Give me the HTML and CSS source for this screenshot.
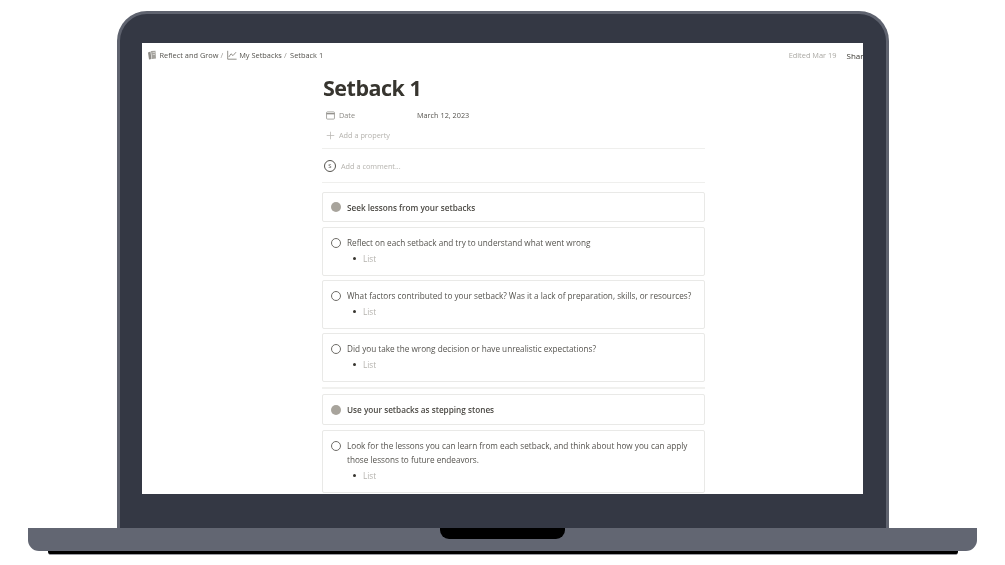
FILE: index.html
```html
<!DOCTYPE HTML>
<html>
<head>
    <title>Setback 1</title>
    <link rel="stylesheet" href="styles.css">
</head>
<body>

<div class="laptop">
    <div class="lid">
        <div class="screen">
            <div class="topbar">
                <svg class="icon-crumb" viewBox="0 0 10 10">
                    <path d="M1 2.5 L3.5 1.5 L4.5 9 L2 9.5 Z" fill="#8f8d88"/>
                    <path d="M4 1 L8.5 0.8 L9 8.5 L5 9 Z" fill="#a3a19c"/>
                    <path d="M5.5 2.5 L8 2.4 M5.7 4.5 L8 4.4" stroke="#e6e5e2" stroke-width="0.7"/>
                </svg>
                <span class="crumb">Reflect and Grow</span>
                <span class="sep">/</span>
                <svg class="icon-crumb" viewBox="0 0 10 10" fill="none" stroke="#77756f" stroke-width="0.8">
                    <path d="M0.7 0.8 V9.2 H9.6"/>
                    <path d="M1.8 7 L4 3.8 L6 5.6 L9 2.2"/>
                </svg>
                <span class="crumb">My Setbacks</span>
                <span class="sep">/</span>
                <span class="crumb">Setback 1</span>
                <span class="edited">Edited Mar 19</span>
                <span class="share">Share</span>
            </div>

            <div class="page">
                <h1>Setback 1</h1>

                <div class="prop">
                    <svg class="icon-prop" viewBox="0 0 10 10" fill="none" stroke="#8c8a85" stroke-width="0.8">
                        <rect x="0.6" y="1" width="8.8" height="8" rx="1"/>
                        <path d="M0.6 3 H9.4" stroke-width="1.4"/>
                    </svg>
                    <span class="prop-name">Date</span>
                    <span class="prop-value">March 12, 2023</span>
                </div>
                <div class="prop prop-add">
                    <svg class="icon-prop" viewBox="0 0 10 10" fill="none" stroke="#b5b3ae" stroke-width="0.8">
                        <path d="M5 0.8 V9.2 M0.8 5 H9.2"/>
                    </svg>
                    <span>Add a property</span>
                </div>

                <div class="comment">
                    <span class="avatar">S</span>
                    <span>Add a comment...</span>
                </div>

                <div class="card card-head">
                    <span class="dot"></span>
                    <b>Seek lessons from your setbacks</b>
                </div>
                <div class="card">
                    <div class="task">
                        <span class="ring"></span>
                        <span>Reflect on each setback and try to understand what went wrong</span>
                    </div>
                    <ul><li>List</li></ul>
                </div>
                <div class="card">
                    <div class="task">
                        <span class="ring"></span>
                        <span>What factors contributed to your setback? Was it a lack of preparation, skills, or resources?</span>
                    </div>
                    <ul><li>List</li></ul>
                </div>
                <div class="card">
                    <div class="task">
                        <span class="ring"></span>
                        <span>Did you take the wrong decision or have unrealistic expectations?</span>
                    </div>
                    <ul><li>List</li></ul>
                </div>

                <hr class="rule">

                <div class="card card-head">
                    <span class="dot"></span>
                    <b>Use your setbacks as stepping stones</b>
                </div>
                <div class="card">
                    <div class="task">
                        <span class="ring"></span>
                        <span>Look for the lessons you can learn from each setback, and think about how you can apply those lessons to future endeavors.</span>
                    </div>
                    <ul><li>List</li></ul>
                </div>
            </div>
        </div>
    </div>
    <div class="base">
        <div class="notch"></div>
    </div>
    <div class="foot"></div>
</div>

</body>
</html>
```

FILE: styles.css
```css
body, html {
    margin: 0;
    padding: 0;
    background: #fff;
    font-family: "Open Sans", "Noto Sans", sans-serif;
    font-size: 8.2px;
    color: #55534e;
    overflow: hidden;
}

.laptop {
    width: 949px;
    margin: 11px 0 0 28px;
}

/* lid and screen */
.lid {
    box-sizing: border-box;
    width: 772px;
    height: 517px;
    margin-left: 89px;
    padding: 29px 23px 34px 22px;
    background: #343844;
    border: 3px solid #5f636f;
    border-bottom: 0;
    border-radius: 30px 30px 0 0;
}

.base {
    height: 23px;
    background: #626672;
    border-radius: 0 0 11px 11px;
}

.notch {
    width: 125px;
    height: 11px;
    margin: 0 auto;
    background: #000;
    border-radius: 0 0 9px 9px;
}

.foot {
    height: 3px;
    margin: 0 19px 0 20px;
    background: #000;
    border-bottom: 1px solid #9a9ca3;
    border-radius: 0 0 3px 3px;
}

.screen {
    height: 451px;
    background: #fff;
    overflow: hidden;
    filter: blur(0.4px);
}

.topbar {
    display: flex;
    align-items: center;
    height: 24px;
    padding-left: 5px;
    font-size: 7.4px;
    white-space: nowrap;
}

.icon-crumb {
    width: 10px;
    height: 10px;
    margin-right: 2.5px;
}

.crumb {
    margin-right: 2px;
}

.sep {
    margin-right: 3.5px;
    color: #9b9994;
}

.edited {
    margin-left: auto;
    color: #aaa8a3;
}

.share {
    margin-left: 10px;
    margin-right: -5px;
    font-size: 8px;
    color: #37352f;
}

/* page body */
.page {
    width: 383px;
    margin-left: 180px;
}

h1 {
    margin: 0;
    height: 38px;
    line-height: 42px;
    padding-left: 1px;
    font-size: 21.5px;
    letter-spacing: -0.5px;
    font-weight: 700;
    color: #37352f;
}

.prop {
    display: flex;
    align-items: center;
    height: 20px;
    padding-left: 4px;
    font-size: 7.3px;
}

.prop-add {
    padding-bottom: 3px;
    color: #b5b3ae;
    border-bottom: 1px solid #efefed;
}

.icon-prop {
    width: 9px;
    height: 9px;
    margin-right: 4px;
}

.prop-name {
    width: 78px;
    color: #8c8a85;
}

.comment {
    display: flex;
    align-items: center;
    height: 33px;
    padding-left: 2px;
    margin-bottom: 9px;
    font-size: 7.3px;
    color: #b5b3ae;
    border-bottom: 1px solid #efefed;
}

.avatar {
    box-sizing: border-box;
    width: 12px;
    height: 12px;
    margin-right: 5px;
    border: 1px solid #55534e;
    border-radius: 50%;
    font-size: 6px;
    line-height: 10px;
    text-align: center;
    color: #55534e;
}

/* cards */
.card {
    box-sizing: border-box;
    padding: 8px 8px 8.5px 8px;
    margin-bottom: 4px;
    border: 1px solid #e9e9e7;
    border-radius: 2px;
}

.card-head {
    display: flex;
    align-items: center;
    gap: 6px;
    height: 30.4px;
    margin-bottom: 5px;
    padding: 0 8px;
}

.card-head b {
    font-weight: 600;
    color: #4b4944;
}

.dot {
    flex: none;
    width: 10px;
    height: 10px;
    border-radius: 50%;
    background: #a8a49c;
}

.task {
    display: flex;
    align-items: flex-start;
    gap: 6px;
    line-height: 14.5px;
}

.ring {
    flex: none;
    box-sizing: border-box;
    width: 10px;
    height: 10px;
    margin-top: 2px;
    border: 1px solid #6f6d68;
    border-radius: 50%;
}

ul {
    margin: 0;
    padding: 0 0 0 22px;
    list-style: none;
    line-height: 16px;
    color: #b5b3ae;
}

li {
    display: flex;
    align-items: center;
    gap: 7px;
}

li::before {
    content: "";
    width: 3px;
    height: 3px;
    border-radius: 50%;
    background: #37352f;
}

.rule {
    height: 2px;
    margin: 5px 0;
    border: 0;
    background: #f1f1ef;
}
```
